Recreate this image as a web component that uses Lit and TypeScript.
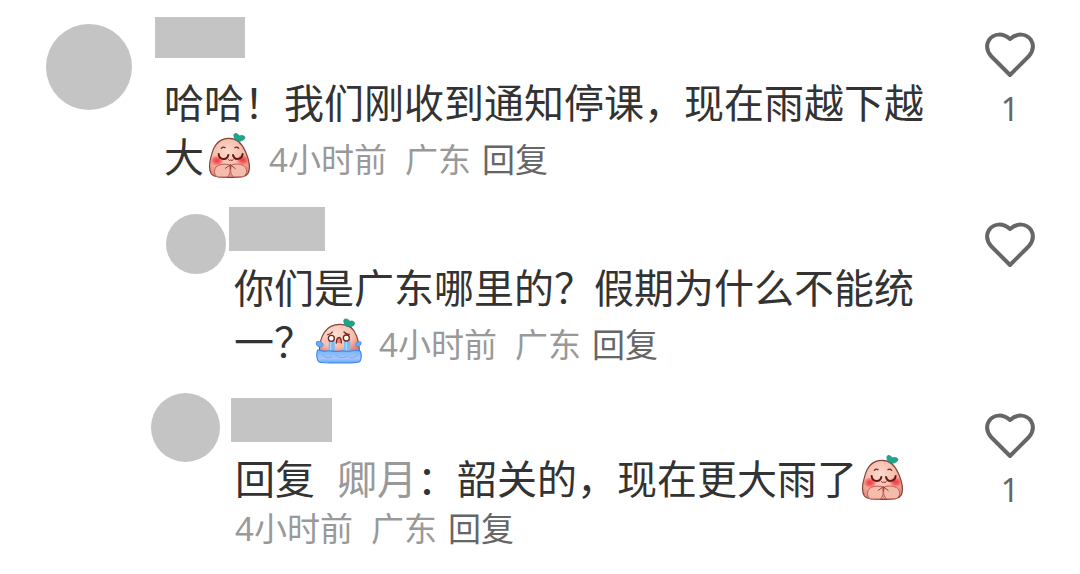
import { LitElement, html, css, svg, nothing } from "lit";
import { customElement, property, state } from "lit/decorators.js";

type Face = "shy" | "cry";

interface Comment {
  kind: "root" | "reply" | "nested";
  replyTo?: string;
  text: string;
  face: Face;
  time: string;
  place: string;
  likes: number;
}

const COMMENTS: Comment[] = [
  { kind: "root", text: "哈哈！我们刚收到通知停课，现在雨越下越大", face: "shy", time: "4小时前", place: "广东", likes: 1 },
  { kind: "reply", text: "你们是广东哪里的？假期为什么不能统一？", face: "cry", time: "4小时前", place: "广东", likes: 0 },
  { kind: "nested", replyTo: "卿月", text: "韶关的，现在更大雨了", face: "shy", time: "4小时前", place: "广东", likes: 1 },
];

const shyFace = svg`
  <defs>
    <radialGradient id="skin" cx="45%" cy="35%" r="65%">
      <stop offset="0" stop-color="#fbd9cb" /><stop offset="0.65" stop-color="#f5b9a9" /><stop offset="1" stop-color="#e58f80" />
    </radialGradient>
    <radialGradient id="blush">
      <stop offset="0" stop-color="#f5363c" /><stop offset="0.45" stop-color="#f5464a" stop-opacity="0.8" /><stop offset="1" stop-color="#f5464a" stop-opacity="0" />
    </radialGradient>
  </defs>
  <path d="M84 40C109 40 124 57 133 79C143 102 151 128 141 145C135 155 121 157 86 157C53 157 38 156 31 147C22 132 25 110 32 88C39 61 56 40 84 40Z" fill="url(#skin)" stroke="#824238" stroke-width="3.5" />
  <path d="M104 45C98 37 97 29 101 26C107 24 112 28 115 33C121 30 129 31 132 37C131 46 120 50 112 48Z" fill="#20a78b" stroke="#178371" stroke-width="2" />
  <ellipse cx="48" cy="107" rx="21" ry="17" fill="url(#blush)" />
  <ellipse cx="125" cy="105" rx="20" ry="16" fill="url(#blush)" />
  <path d="M61 70Q66 64 72 68M102 68Q108 64 113 70" fill="none" stroke="#71261e" stroke-width="4" stroke-linecap="round" />
  <path d="M53 87C54 105 78 108 82 90M96 90C100 107 122 105 125 87" fill="none" stroke="#651a18" stroke-width="6" stroke-linecap="round" />
  <path d="M82 104Q85 109 89 105Q93 109 97 104" fill="none" stroke="#8c2924" stroke-width="3" stroke-linecap="round" />
  <path d="M86 120C73 116 53 117 45 126C37 137 40 153 51 156L78 156C87 150 89 139 86 120Z" fill="#f5bcad" stroke="#b56355" stroke-width="3" />
  <path d="M91 120C104 115 122 117 131 124C141 135 137 151 126 155L99 156C89 150 87 137 91 120Z" fill="#f5bcad" stroke="#b56355" stroke-width="3" />
  <path d="M73 130L88 119L103 131M88 120L88 132" fill="none" stroke="#8f4338" stroke-width="3" stroke-linecap="round" />`;

const cryFace = svg`
  <defs>
    <radialGradient id="pale" cx="40%" cy="35%" r="70%">
      <stop offset="0" stop-color="#fde0d3" /><stop offset="0.65" stop-color="#f8bfae" /><stop offset="1" stop-color="#ea7c72" />
    </radialGradient>
    <linearGradient id="pool" x1="0" y1="0" x2="0" y2="1">
      <stop offset="0" stop-color="#72b5fa" /><stop offset="0.65" stop-color="#a4c6fc" /><stop offset="1" stop-color="#65a7f7" />
    </linearGradient>
  </defs>
  <path d="M34 128C34 105 39 82 49 67C61 48 77 43 97 43C120 43 137 54 145 76C151 91 154 110 154 128Z" fill="url(#pale)" stroke="#87473e" stroke-width="3.5" />
  <path d="M115 49C108 43 106 34 108 29C114 24 121 28 126 34C132 31 140 34 140 41C138 49 127 51 121 49Z" fill="#20a487" stroke="#178371" stroke-width="2" />
  <path d="M59 74Q68 74 73 66M108 66Q115 74 124 73" fill="none" stroke="#71261e" stroke-width="4" stroke-linecap="round" />
  <path d="M62 88H80V123H62ZM108 88H127V123H108Z" fill="#79bbf3" />
  <path d="M68 90V122M115 90V122" stroke="#a9d6fa" stroke-width="4" />
  <circle cx="70" cy="85" r="9" fill="#fff" stroke="#74281e" stroke-width="4" />
  <circle cx="115" cy="84" r="9" fill="#fff" stroke="#74281e" stroke-width="4" />
  <path d="M85 99C86 77 101 77 100 99" fill="#eb8379" stroke="#7e2925" stroke-width="4" stroke-linecap="round" />
  <path d="M25 96C31 92 38 94 43 99C49 106 43 112 35 111C27 111 24 104 25 96ZM159 96C152 92 146 95 144 101C141 108 149 112 154 108C159 105 160 101 159 96Z" fill="#64adf5" stroke="#4389dd" stroke-width="2.5" />
  <path d="M29 120C39 119 45 126 57 123C65 120 78 126 91 124C106 120 116 126 128 123C143 121 150 119 157 124C162 134 160 149 155 155C147 160 42 160 33 156C25 150 25 130 29 120Z" fill="url(#pool)" stroke="#3e87ec" stroke-width="3.5" />
  <path d="M42 133Q55 149 72 140M82 134Q100 151 120 137M123 142Q138 148 148 134" fill="none" stroke="#82a7f3" stroke-width="3" />`;

@customElement("like-button")
export class LikeButton extends LitElement {
  @property({ type: Number }) count = 0;
  @state() private pressed = false;

  static styles = css`
    :host { display: block; }
    .like {
      display: flex; flex-direction: column; align-items: center; gap: 13px;
      width: 100%; padding: 0; border: 0; background: none; cursor: pointer;
      color: #666; font: 32px/36px "Noto Sans", "Noto Sans CJK SC", sans-serif;
    }
    .heart { display: block; width: 50px; height: 46px; fill: none; stroke: currentColor; stroke-width: 4; stroke-linejoin: round; }
    .pressed .heart { fill: #f04; stroke: #f04; }
  `;

  render() {
    const total = this.count + (this.pressed ? 1 : 0);
    return html`<button class="like ${this.pressed ? "pressed" : ""}" aria-label="赞" aria-pressed=${this.pressed}
      @click=${() => (this.pressed = !this.pressed)}>
      <svg class="heart" viewBox="0 0 50 46"><path d="M25 43L6 24C2 19 1 13 4 8C9 1 18 1 25 7C32 1 41 1 46 8C49 13 48 19 44 24Z" /></svg>
      ${total ? html`<span class="count">${total}</span>` : nothing}
    </button>`;
  }
}

@customElement("comment-item")
export class CommentItem extends LitElement {
  @property({ attribute: false }) data!: Comment;

  static styles = css`
    :host { display: block; }
    .comment { display: flex; align-items: flex-start; }
    .avatar { flex: none; border-radius: 50%; background: #c4c4c4; }
    .body { flex: 1; min-width: 0; }
    .name { height: 44px; background: #c4c4c4; }
    .text { margin: 10px 0 0 5px; color: #333; font-size: 40px; line-height: 54px; }
    .like { flex: none; width: 70px; margin-left: 30px; padding-top: 15px; }

    .root .avatar { width: 86px; height: 86px; margin: 7px 23px 0 46px; }
    .root .name { width: 90px; height: 41px; }
    .root .text { margin: 18px 0 0 9px; }

    .reply .avatar { width: 60px; height: 60px; margin: 7px 3px 0 166px; }
    .reply .name { width: 96px; }

    .nested .avatar { width: 69px; height: 69px; margin: -5px 11px 0 151px; }
    .nested .name { width: 101px; }
    .nested .text { margin-left: 4px; }

    .mention { margin-left: 22px; color: #999; text-decoration: none; }
    .face { width: 48px; height: 46px; vertical-align: -7px; }
    .meta { display: inline-flex; gap: 18px; margin-left: 17px; color: #999; font-size: 33px; line-height: 46px; white-space: nowrap; }
    .nested .meta { display: flex; margin-left: 0; }
    .where { display: flex; gap: 11px; }
    .answer { padding: 0; border: 0; background: none; color: #666; font: inherit; cursor: pointer; }
  `;

  render() {
    const c = this.data;
    return html`<article class="comment ${c.kind}">
      <div class="avatar"></div>
      <div class="body">
        <div class="name"></div>
        <div class="text">${c.replyTo ? html`回复<a class="mention" href="#user">${c.replyTo}</a>：` : nothing}${c.text}<svg
          class="face" viewBox=${c.face === "shy" ? "9 24 144 138" : "18 24 144 138"}>${c.face === "shy" ? shyFace : cryFace}</svg><span
          class="meta"><span>${c.time}</span><span class="where"><span>${c.place}</span><button class="answer">回复</button></span></span></div>
      </div>
      <like-button class="like" .count=${c.likes}></like-button>
    </article>`;
  }
}

@customElement("app-root")
export class AppRoot extends LitElement {
  static styles = css`
    :host { display: block; min-height: 100vh; box-sizing: border-box; background: #fff; font-family: "Noto Sans", "Noto Sans CJK SC", sans-serif; }
    .thread { display: flex; flex-direction: column; gap: 23px; padding: 17px 35px 17px 0; }
    .nested { margin-top: 6px; }
  `;

  render() {
    return html`<main class="thread" lang="zh-CN">
      ${COMMENTS.map((c) => html`<comment-item class=${c.kind} .data=${c}></comment-item>`)}
    </main>`;
  }
}
